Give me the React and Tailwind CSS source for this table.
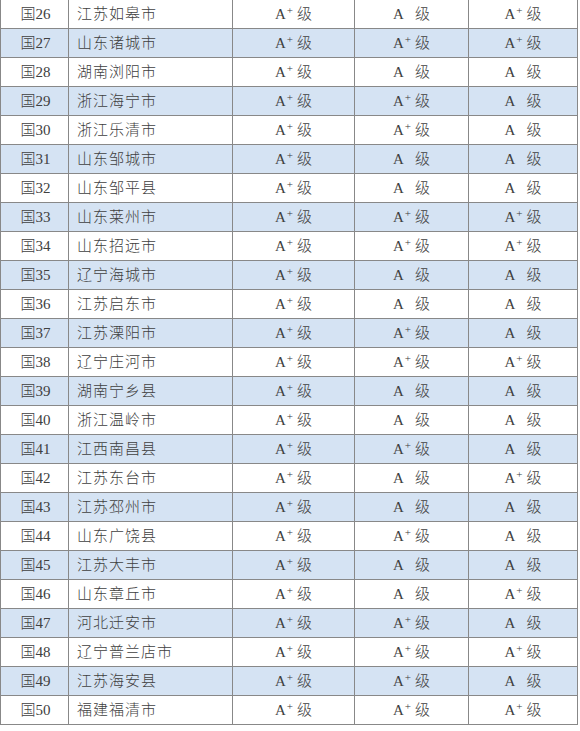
import React from "react";

const rows = [
  [26, "江苏如皋市", 1, 0, 1],
  [27, "山东诸城市", 1, 1, 1],
  [28, "湖南浏阳市", 1, 0, 0],
  [29, "浙江海宁市", 1, 1, 0],
  [30, "浙江乐清市", 1, 1, 0],
  [31, "山东邹城市", 1, 0, 0],
  [32, "山东邹平县", 1, 0, 0],
  [33, "山东莱州市", 1, 1, 1],
  [34, "山东招远市", 1, 1, 1],
  [35, "辽宁海城市", 1, 0, 0],
  [36, "江苏启东市", 1, 0, 0],
  [37, "江苏溧阳市", 1, 1, 0],
  [38, "辽宁庄河市", 1, 1, 1],
  [39, "湖南宁乡县", 1, 0, 0],
  [40, "浙江温岭市", 1, 0, 0],
  [41, "江西南昌县", 1, 1, 0],
  [42, "江苏东台市", 1, 0, 1],
  [43, "江苏邳州市", 1, 0, 0],
  [44, "山东广饶县", 1, 1, 0],
  [45, "江苏大丰市", 1, 0, 0],
  [46, "山东章丘市", 1, 0, 1],
  [47, "河北迁安市", 1, 1, 0],
  [48, "辽宁普兰店市", 1, 1, 1],
  [49, "江苏海安县", 1, 1, 0],
  [50, "福建福清市", 1, 1, 1],
];

const font = { fontFamily: '"Liberation Serif", "Noto Sans CJK SC", serif' };

function Grade({ plus }) {
  return (
    <span className="inline-flex items-baseline">
      <span>A</span>
      <span className={"relative -top-[5px] text-[11px] leading-none ml-[1px] " + (plus ? "" : "invisible")}>+</span>
      <span className="ml-[4px]">级</span>
    </span>
  );
}

export default function App() {
  return (
    <div className="w-[580px] h-[731px] bg-white overflow-hidden text-[#404040] text-[15px] font-light" style={font}>
      <div className="w-[578px] border-l border-r border-[#888888]">
        {rows.map(([n, name, a, b, c], i) => (
          <div
            key={n}
            className={
              "grid grid-cols-[68px_164px_122px_114px_108px] h-[29px] border-b border-[#888888] " +
              (i % 2 === 1 ? "bg-[#d5e3f3]" : "bg-white")
            }
          >
            <div className="border-r border-[#888888] flex items-center justify-center pl-[2px]">
              <span>国{n}</span>
            </div>
            <div className="border-r border-[#888888] flex items-center pl-[8px] tracking-[1px]">
              {name}
            </div>
            <div className="border-r border-[#888888] flex items-center justify-center">
              <Grade plus={a} />
            </div>
            <div className="border-r border-[#888888] flex items-center justify-center">
              <Grade plus={b} />
            </div>
            <div className="flex items-center justify-center">
              <Grade plus={c} />
            </div>
          </div>
        ))}
      </div>
    </div>
  );
}
